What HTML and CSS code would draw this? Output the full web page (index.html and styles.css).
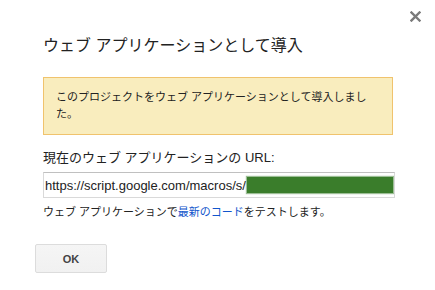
FILE: index.html
```html
<!DOCTYPE html>
<html lang="ja">
<head>
    <meta charset="UTF-8">
    <title>ウェブ アプリケーションとして導入</title>
    <link rel="stylesheet" href="styles.css">
</head>
<body>
    <div class="dialog">
        <!-- Close button -->
        <div class="close-btn" title="閉じる">
            <svg width="11" height="11" viewBox="0 0 11 11">
                <path d="M1.5 1.5 L9.5 9.5 M9.5 1.5 L1.5 9.5" stroke="#7a7a7a" stroke-width="2.4" stroke-linecap="square"/>
            </svg>
        </div>

        <div class="dialog-body">
            <h1 class="dialog-title">ウェブ アプリケーションとして導入</h1>

            <div class="notice">
                このプロジェクトをウェブ アプリケーションとして導入しました。
            </div>

            <div class="url-label">現在のウェブ アプリケーションの URL:</div>
            <div class="url-box">
                https://script.google.com/macros/s/<span class="redact"></span>
            </div>
            <div class="hint">
                ウェブ アプリケーションで<a href="#" class="hint-link">最新のコード</a>をテストします。
            </div>
        </div>

        <div class="dialog-footer">
            <button class="btn">OK</button>
        </div>
    </div>
</body>
</html>
```

FILE: styles.css
```css
* {
    margin: 0;
    padding: 0;
    box-sizing: border-box;
}

body {
    background-color: #ffffff;
    color: #222222;
    font-family: 'Liberation Sans', Arial, 'Noto Sans CJK JP', sans-serif;
}

.dialog {
    position: relative;
    width: 435px;
    height: 290px;
}

.close-btn {
    position: absolute;
    top: 11px;
    right: 14px;
    width: 11px;
    height: 11px;
    cursor: pointer;
}

.close-btn svg {
    display: block;
}

.dialog-body {
    padding: 36px 40px 0 43px;
}

.dialog-title {
    font-size: 16px;
    font-weight: normal;
    line-height: 20px;
    color: #222;
}

/* Yellow notice */
.notice {
    margin-top: 21px;
    width: 350px;
    background-color: #f9edbe;
    border: 1px solid #f0c36d;
    padding: 11px 22px 11px 12px;
    font-size: 11px;
    line-height: 17px;
    color: #222;
}

.url-label {
    margin-top: 15px;
    font-size: 13px;
    line-height: 16px;
    color: #222;
}

.url-box {
    margin-top: 6px;
    width: 352px;
    height: 26px;
    display: flex;
    align-items: center;
    padding: 0 1px;
    border: 1px solid #d9d9d9;
    border-top-color: #c0c0c0;
    font-size: 13px;
    color: #222;
    white-space: nowrap;
    overflow: hidden;
}

.redact {
    display: inline-block;
    width: 148px;
    height: 16px;
    margin-left: 1px;
    background-color: #3a7d2b;
    box-shadow: 0 0 1px 1px rgba(58, 125, 43, 0.5);
}

.hint {
    margin-top: 6px;
    font-size: 11px;
    line-height: 16px;
    color: #222;
}

.hint-link {
    color: #1155cc;
    text-decoration: none;
}

/* Footer */
.dialog-footer {
    padding: 24px 0 0 35px;
}

.btn {
    width: 72px;
    height: 29px;
    background: linear-gradient(#f5f5f5, #f1f1f1);
    border: 1px solid #dcdcdc;
    border-radius: 2px;
    font-family: 'Liberation Sans', Arial, sans-serif;
    font-size: 11px;
    font-weight: bold;
    color: #444;
    cursor: pointer;
}
```
